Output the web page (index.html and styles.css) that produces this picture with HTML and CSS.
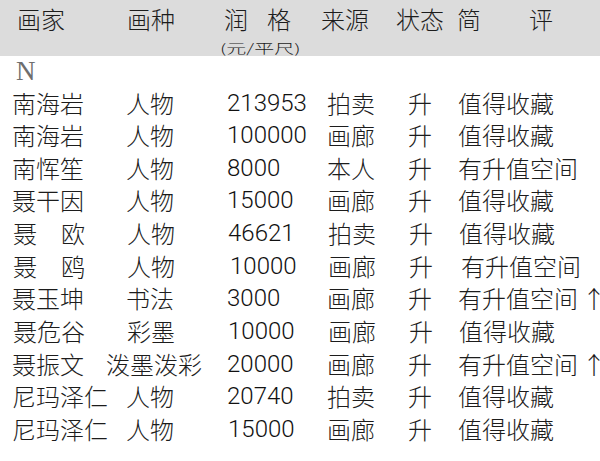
FILE: index.html
```html
<!DOCTYPE html>
<html lang="zh">
<head>
<meta charset="utf-8">
<link rel="stylesheet" href="styles.css">
</head>
<body>
<div class="page">
  <div class="head">
    <div class="hc">画家</div>
    <div class="hc">画种</div>
    <div class="hc price-h">
      <div class="main">润<span class="ge">格</span></div>
      <div class="sub">(元/平尺)</div>
    </div>
    <div class="hc">来源</div>
    <div class="hc">状态</div>
    <div class="hc">简　　评</div>
  </div>
  <div class="letter">N</div>
  <div class="rows">
    <div class="row"><span>南海岩</span><span>人物</span><span class="num">213953</span><span>拍卖</span><span>升</span><span>值得收藏</span></div>
    <div class="row"><span>南海岩</span><span>人物</span><span class="num">100000</span><span>画廊</span><span>升</span><span>值得收藏</span></div>
    <div class="row"><span>南恽笙</span><span>人物</span><span class="num">8000</span><span>本人</span><span>升</span><span>有升值空间</span></div>
    <div class="row"><span>聂干因</span><span>人物</span><span class="num">15000</span><span>画廊</span><span>升</span><span>值得收藏</span></div>
    <div class="row r2"><span>聂　欧</span><span>人物</span><span class="num">46621</span><span>拍卖</span><span>升</span><span>值得收藏</span></div>
    <div class="row r2"><span>聂　鸥</span><span>人物</span><span class="num n3">10000</span><span>画廊</span><span>升</span><span class="c4">有升值空间</span></div>
    <div class="row"><span>聂玉坤</span><span>书法</span><span class="num">3000</span><span>画廊</span><span>升</span><span class="cm">有升值空间<span class="up">↑</span></span></div>
    <div class="row r2"><span>聂危谷</span><span>彩墨</span><span class="num">10000</span><span>画廊</span><span>升</span><span>值得收藏</span></div>
    <div class="row"><span>聂振文</span><span class="wide">泼墨泼彩</span><span class="num">20000</span><span>画廊</span><span>升</span><span class="cm">有升值空间<span class="up">↑</span></span></div>
    <div class="row"><span>尼玛泽仁</span><span>人物</span><span class="num">20740</span><span>拍卖</span><span>升</span><span>值得收藏</span></div>
    <div class="row"><span>尼玛泽仁</span><span>人物</span><span class="num n1">15000</span><span>画廊</span><span>升</span><span>值得收藏</span></div>
  </div>
</div>
</body>
</html>
```

FILE: styles.css
```css
html, body {
  margin: 0;
  padding: 0;
  background: #ffffff;
}
body {
  width: 600px;
  height: 461px;
  overflow: hidden;
  font-family: "Noto Sans CJK SC", "Noto Sans", sans-serif;
  font-weight: 300;
  color: #1c1c1c;
}
.page {
  width: 600px;
}
.head {
  height: 56px;
  background: #dcdcdc;
  display: grid;
  grid-template-columns: 110px 97px 97px 75px 61px 1fr;
  padding-left: 17px;
  align-items: start;
  font-size: 24px;
  line-height: 38px;
}
.hc {
  white-space: nowrap;
}
.price-h {
  display: flex;
  flex-direction: column;
}
.price-h .main {
  line-height: 38px;
}
.ge {
  margin-left: 19px;
}
.sub {
  font-size: 20px;
  line-height: 16px;
  margin-left: -4px;
  transform: scaleY(0.64);
  transform-origin: left center;
  margin-top: 2px;
}
.letter {
  height: 30.5px;
  line-height: 30.5px;
  padding-left: 16px;
  font-family: "Liberation Serif", serif;
  font-weight: 400;
  font-size: 27px;
  color: #6e6e6e;
}
.rows {
  font-size: 24px;
  line-height: 32.65px;
}
.row {
  display: grid;
  grid-template-columns: 114px 100px 101px 81px 50px 1fr;
  padding-left: 12px;
  white-space: nowrap;
}
.row.r2 {
  padding-left: 13px;
}
.num {
  font-family: "Roboto", "Liberation Sans", sans-serif;
  font-weight: 300;
  color: #111;
  padding-left: 1px;
}
.n3 {
  padding-left: 3px;
}
.n1 {
  padding-left: 2px;
}
.wide {
  margin-left: -20px;
}
.c4 {
  padding-left: 2px;
}
.up {
  margin-left: 4px;
  letter-spacing: -10px;
}
```
